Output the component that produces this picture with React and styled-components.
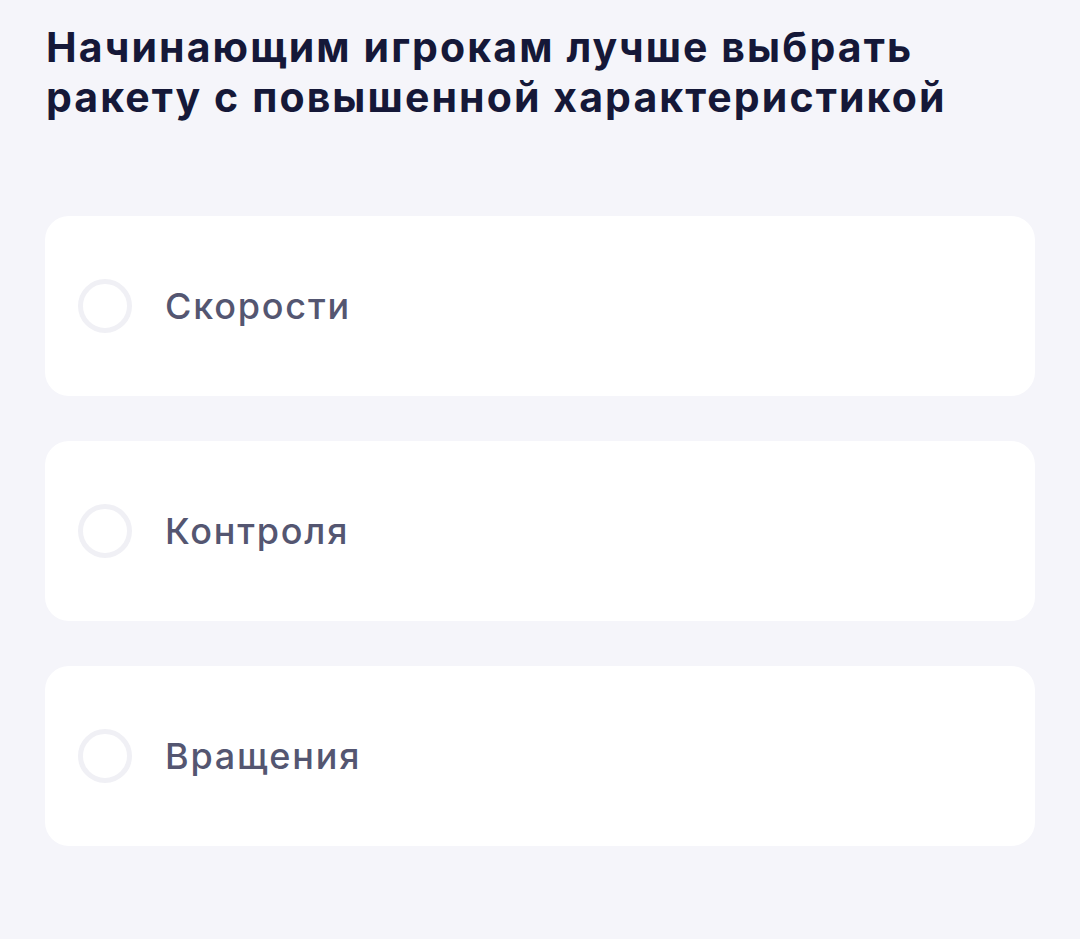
import React from 'react'
import styled, { createGlobalStyle } from 'styled-components'

const Global = createGlobalStyle`
  html, body {
    margin: 0;
    padding: 0;
    background: #f5f5fa;
  }
  body {
    font-family: Inter, "Noto Sans", sans-serif;
  }
`

const Page = styled.div`
  min-height: 939px;
  box-sizing: border-box;
  padding: 22px 45px 40px 45px;
  background: #f5f5fa;
`

const Question = styled.h1`
  margin: 0 0 94px 1px;
  font-size: 41px;
  line-height: 50px;
  font-weight: 700;
  color: #151838;
  letter-spacing: 2.1px;
`

const Options = styled.div`
  display: flex;
  flex-direction: column;
  gap: 45px;
`

const Option = styled.label`
  display: flex;
  align-items: center;
  height: 180px;
  box-sizing: border-box;
  padding: 0 0 0 33px;
  background: #ffffff;
  border-radius: 24px;
  cursor: pointer;
`

const Radio = styled.span`
  width: 54px;
  height: 54px;
  box-sizing: border-box;
  border-radius: 50%;
  border: 5px solid #f0f0f5;
  flex-shrink: 0;
`

const Label = styled.span`
  margin-left: 33px;
  font-size: 36px;
  font-weight: 500;
  color: #545671;
  letter-spacing: 1.8px;
`

const answers = ['Скорости', 'Контроля', 'Вращения']

export default function App() {
  return (
    <>
      <Global />
      <Page>
        <Question>
          Начинающим игрокам лучше выбрать
          <br />
          ракету с повышенной характеристикой
        </Question>
        <Options>
          {answers.map((a) => (
            <Option key={a}>
              <Radio />
              <Label>{a}</Label>
            </Option>
          ))}
        </Options>
      </Page>
    </>
  )
}
